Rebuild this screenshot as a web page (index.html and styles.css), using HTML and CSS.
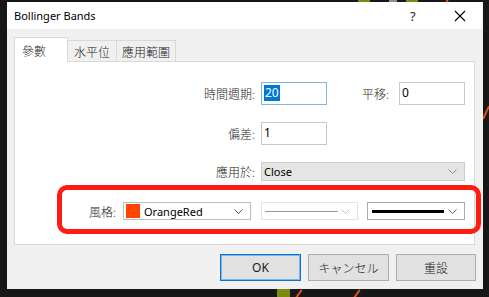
FILE: index.html
```html
<!DOCTYPE html>
<html>
<head>
<meta charset="utf-8">
<link rel="stylesheet" href="styles.css">
</head>
<body>
<div class="chart">
  <span class="mark olive m1"></span>
  <span class="mark grey m2"></span>
  <span class="mark olive m3"></span>
  <span class="mark olive m4"></span>
  <span class="line l1"></span>
  <span class="line l2"></span>
  <span class="line l3"></span>
  <span class="line l4"></span>
</div>
<div class="dialog">
  <div class="titlebar">
    <span class="title">Bollinger Bands</span>
    <span class="help">?</span>
    <span class="close"><svg width="12" height="12" viewBox="0 0 12 12"><path d="M1 1 L11 11 M11 1 L1 11" stroke="#000" stroke-width="1.1" fill="none"/></svg></span>
  </div>
  <div class="body">
    <div class="tabs">
      <div class="tab active cjk">參數</div>
      <div class="tab t2 cjk">水平位</div>
      <div class="tab t3 cjk">應用範圍</div>
    </div>
    <div class="panel">
      <div class="row r1">
        <span class="lbl cjk">時間週期:</span>
        <div class="input focus"><span class="sel">20</span></div>
        <span class="lbl2 cjk">平移:</span>
        <div class="input">0</div>
      </div>
      <div class="row r2">
        <span class="lbl cjk">偏差:</span>
        <div class="input">1</div>
      </div>
      <div class="row r3">
        <span class="lbl cjk">應用於:</span>
        <div class="combo grey"><span>Close</span><svg class="chev" width="9" height="5" viewBox="0 0 9 5"><path d="M0.5 0.5 L4.5 4.5 L8.5 0.5" stroke="#8a8a8a" fill="none"/></svg></div>
      </div>
      <div class="row r4">
        <span class="lbl short cjk">風格:</span>
        <div class="combo color"><span class="swatch"></span><span>OrangeRed</span><svg class="chev" width="9" height="5" viewBox="0 0 9 5"><path d="M0.5 0.5 L4.5 4.5 L8.5 0.5" stroke="#555" fill="none"/></svg></div>
        <div class="combo disabled"><span class="thin"></span><svg class="chev" width="9" height="5" viewBox="0 0 9 5"><path d="M0.5 0.5 L4.5 4.5 L8.5 0.5" stroke="#c4c4c4" fill="none"/></svg></div>
        <div class="combo width"><span class="thick"></span><svg class="chev" width="9" height="5" viewBox="0 0 9 5"><path d="M0.5 0.5 L4.5 4.5 L8.5 0.5" stroke="#555" fill="none"/></svg></div>
      </div>
    </div>
    <div class="buttons">
      <div class="btn default">OK</div>
      <div class="btn cjk">キャンセル</div>
      <div class="btn cjk">重設</div>
    </div>
  </div>
</div>
<div class="annot"></div>
</body>
</html>
```
FILE: styles.css
```css
* { box-sizing: border-box; }
html, body { margin: 0; padding: 0; }
body {
  width: 489px;
  height: 297px;
  overflow: hidden;
  position: relative;
  background: #171717;
  font-family: "Noto Sans", "Noto Sans CJK TC", sans-serif;
  font-size: 11px;
  color: #000;
}
.cjk {
  font-family: "Noto Sans CJK TC", "Noto Sans", sans-serif;
  font-size: 12px;
  font-weight: 300;
}
.chart { position: absolute; inset: 0; }
.mark { position: absolute; display: block; }
.olive { background: #7d8a12; }
.grey { background: #8c8c8c; }
.m1 { left: 358px; top: 0; width: 12px; height: 3px; }
.m2 { left: 389px; top: 0; width: 8px; height: 3px; }
.m3 { left: 406px; top: 0; width: 12px; height: 3px; }
.m4 { left: 277px; top: 289px; width: 13px; height: 8px; }
.line { position: absolute; display: block; height: 2px; background: #e0501a; transform-origin: left center; }
.l1 { left: 483px; top: 118px; width: 14px; transform: rotate(-65deg); }
.l2 { left: 296px; top: 297px; width: 10px; transform: rotate(-55deg); }
.l3 { left: 354px; top: 297px; width: 10px; transform: rotate(-55deg); }
.l4 { left: 446px; top: 3px; width: 6px; transform: rotate(-70deg); }

.dialog {
  position: relative;
  margin: 2px 0 0 7px;
  width: 476px;
  height: 287px;
  display: flex;
  flex-direction: column;
  background: #f0f0f0;
}
.titlebar {
  height: 27px;
  background: #fff;
  margin-right: 1px;
  display: flex;
  align-items: center;
  padding-left: 7px;
}
.title { flex: 1; font-size: 11px; color: #000; }
.help { width: 12px; margin-right: 32px; font-size: 13px; color: #222; }
.close { width: 12px; height: 12px; margin-right: 16px; display: flex; }

.body {
  flex: 1;
  padding: 8px 7px 0 7px;
  display: flex;
  flex-direction: column;
}
.tabs {
  display: flex;
  align-items: flex-end;
  height: 24px;
  position: relative;
  z-index: 1;
}
.tab {
  height: 21px;
  border: 1px solid #d9d9d9;
  border-left: none;
  border-bottom: none;
  background: #f0f0f0;
  display: flex;
  align-items: center;
  justify-content: center;
  color: #1a1a1a;
}
.tab.active {
  height: 25px;
  margin-bottom: -1px;
  width: 54px;
  background: #fff;
  border-left: 1px solid #d9d9d9;
  justify-content: flex-start;
  padding-left: 7px;
  color: #333;
}
.t2 { width: 49px; }
.t3 { width: 59px; }
.panel {
  height: 184px;
  margin-right: 1px;
  background: #fff;
  border: 1px solid #d9d9d9;
  padding-top: 20px;
}
.row { display: flex; align-items: center; }
.r2 { margin-top: 17px; }
.r3 { margin-top: 17px; }
.r4 { margin-top: 21px; }
.lbl {
  width: 240px;
  text-align: right;
  margin-right: 6px;
  color: #1a1a1a;
}
.lbl.short { width: 101px; margin-right: 7px; }
.lbl2 {
  width: 62px;
  text-align: right;
  margin-right: 10px;
  color: #1a1a1a;
}
.input {
  width: 66px;
  height: 23px;
  border: 1px solid #c8c8c8;
  padding: 2px 0 0 2px;
  font-size: 12px;
  line-height: 16px;
}
.input.focus { border-color: #7eb4ea; }
.sel { background: #0078d7; color: #fff; display: inline-block; padding: 0 1px; }
.combo {
  height: 18px;
  border: 1px solid #c9c9c9;
  display: flex;
  align-items: center;
  position: relative;
  background: #fff;
}
.combo .chev { position: absolute; right: 7px; top: 6px; }
.combo.grey {
  width: 204px;
  height: 19px;
  background: #e5e5e5;
  border-color: #cccccc;
  padding-left: 2px;
}
.combo.color { width: 128px; padding-left: 2px; border-color: #bdbdbd; }
.swatch { width: 14px; height: 14px; background: #ff4500; margin-right: 4px; }
.combo.disabled { width: 97px; margin-left: 10px; border-color: #e3e3e3; }
.thin { display: block; width: 73px; height: 1px; background: #9a9a9a; margin-left: 3px; }
.combo.width { width: 98px; margin-left: 9px; border-color: #a9a9a9; }
.thick { display: block; width: 72px; height: 3px; background: #000; margin-left: 4px; }

.buttons {
  margin-top: 9px;
  display: flex;
  justify-content: flex-end;
  gap: 7px;
}
.btn {
  width: 81px;
  height: 27px;
  background: #e1e1e1;
  border: 1px solid #adadad;
  display: flex;
  align-items: center;
  justify-content: center;
  color: #1a1a1a;
  font-size: 12px;
}
.btn:last-child { width: 80px; }
.btn.default { border-color: #0078d7; box-shadow: inset 0 0 0 1px #7eb4ea; }

.annot {
  position: absolute;
  left: 57px;
  top: 185px;
  width: 424px;
  height: 49px;
  border: 5px solid #ff1d12;
  border-radius: 10px;
}
```
